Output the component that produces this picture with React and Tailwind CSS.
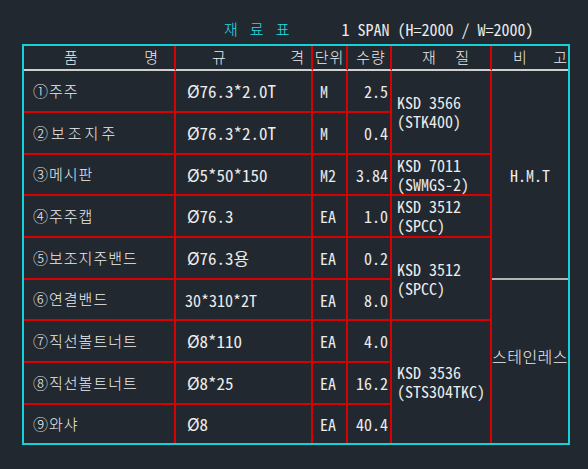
import React from "react";

const rows = [
  { name: "①주주", spec: "Ø76.3*2.0T", unit: "M", qty: "2.5" },
  { name: "②보조지주", spec: "Ø76.3*2.0T", unit: "M", qty: "0.4", track: "tracking-[3px]" },
  { name: "③메시판", spec: "Ø5*50*150", unit: "M2", qty: "3.84" },
  { name: "④주주캡", spec: "Ø76.3", unit: "EA", qty: "1.0" },
  { name: "⑤보조지주밴드", spec: "Ø76.3용", unit: "EA", qty: "0.2" },
  { name: "⑥연결밴드", spec: "30*310*2T", unit: "EA", qty: "8.0", small: true },
  { name: "⑦직선볼트너트", spec: "Ø8*110", unit: "EA", qty: "4.0" },
  { name: "⑧직선볼트너트", spec: "Ø8*25", unit: "EA", qty: "16.2" },
  { name: "⑨와샤", spec: "Ø8", unit: "EA", qty: "40.4" },
];

// material cells start on these rows, with their span
const materials = {
  0: { span: "row-span-2", lines: ["KSD 3566", "(STK400)"] },
  2: { span: "row-span-1", lines: ["KSD 7011", "(SWMGS-2)"] },
  3: { span: "row-span-1", lines: ["KSD 3512", "(SPCC)"] },
  4: { span: "row-span-2", lines: ["KSD 3512", "(SPCC)"] },
  6: { span: "row-span-3", lines: ["KSD 3536", "(STS304TKC)"], last: true },
};

const red = "border-[#d80000]";
const mono = "font-['Noto_Sans_Mono_CJK_KR','DejaVu_Sans_Mono','Noto_Sans_CJK_KR',monospace]";
const kr = "font-['Noto_Sans_CJK_KR','Noto_Sans',sans-serif]";

function Header() {
  const h = "border-r-2 border-b-2 border-r-[#d80000] border-b-[#cfcfcf] flex items-center text-[15px]";
  return (
    <>
      <div className={`${h} justify-between pl-[40px] pr-[16px]`}>
        <span>품</span>
        <span>명</span>
      </div>
      <div className={`${h} justify-between pl-[36px] pr-[7px]`}>
        <span>규</span>
        <span>격</span>
      </div>
      <div className={`${h} justify-center tracking-[1px]`}>단위</div>
      <div className={`${h} justify-center pl-[4px] tracking-[1px]`}>수량</div>
      <div className={`${h} justify-between pl-[30px] pr-[21px]`}>
        <span>재</span>
        <span>질</span>
      </div>
      <div className="border-b-2 border-b-[#cfcfcf] flex items-center justify-between pl-[21px] pr-[1px] text-[15px]">
        <span>비</span>
        <span>고</span>
      </div>
    </>
  );
}

export default function App() {
  return (
    <div className="w-[588px] h-[469px] bg-[#212830] overflow-hidden pt-[17px] pl-[22px] text-[#ececec] font-light">
      {/* title */}
      <div className="h-[24px] flex items-center pl-[202px]">
        <div className={`${kr} flex gap-[12px] text-[15px] text-[#1ee0e6]`}>
          <span>재</span>
          <span>료</span>
          <span>표</span>
        </div>
        <div className={`${mono} ml-[52px] text-[16px] whitespace-pre`}>1 SPAN (H=2000 / W=2000)</div>
      </div>

      {/* table */}
      <div
        className={`${kr} mt-[3px] w-[548px] h-[401px] border-2 border-[#14d2d8] grid grid-cols-[152px_137px_35px_44px_100px_76px] grid-rows-[25px_42px_42px_41px_42px_42px_41px_42px_42px_1fr]`}
      >
        <Header />
        {rows.map((r, i) => {
          const last = i === rows.length - 1;
          const cell = `${red} border-r-2 flex items-center ${last ? "border-b-0" : "border-b-2"}`;
          const m = materials[i];
          return (
            <React.Fragment key={i}>
              <div className={`${cell} pl-[9px] text-[15px] ${r.track || "tracking-[1px]"}`}>{r.name}</div>
              <div className={`${cell} ${mono} ${r.small ? "pl-[9px] text-[16px]" : "pl-[11px] text-[17px]"}`}>
                {r.spec}
              </div>
              <div className={`${cell} ${mono} pl-[7px] text-[16px]`}>{r.unit}</div>
              <div className={`${cell} ${mono} justify-end pr-[2px] text-[16px]`}>{r.qty}</div>
              {m && (
                <div
                  className={`${red} border-r-2 ${m.last ? "border-b-0" : "border-b-2"} ${m.span} ${mono} flex flex-col justify-center pl-[5px] text-[16px] leading-[19px]`}
                >
                  {m.lines.map((l) => (
                    <span key={l}>{l}</span>
                  ))}
                </div>
              )}
              {i === 0 && (
                <div className={`row-span-5 border-b-2 border-b-[#b4b4b4] ${mono} flex items-center justify-center text-[16px]`}>
                  H.M.T
                </div>
              )}
              {i === 5 && (
                <div className="row-span-4 flex items-center justify-center pb-[12px] text-[16px] tracking-[0.5px] whitespace-nowrap">
                  스테인레스
                </div>
              )}
            </React.Fragment>
          );
        })}
      </div>
    </div>
  );
}
